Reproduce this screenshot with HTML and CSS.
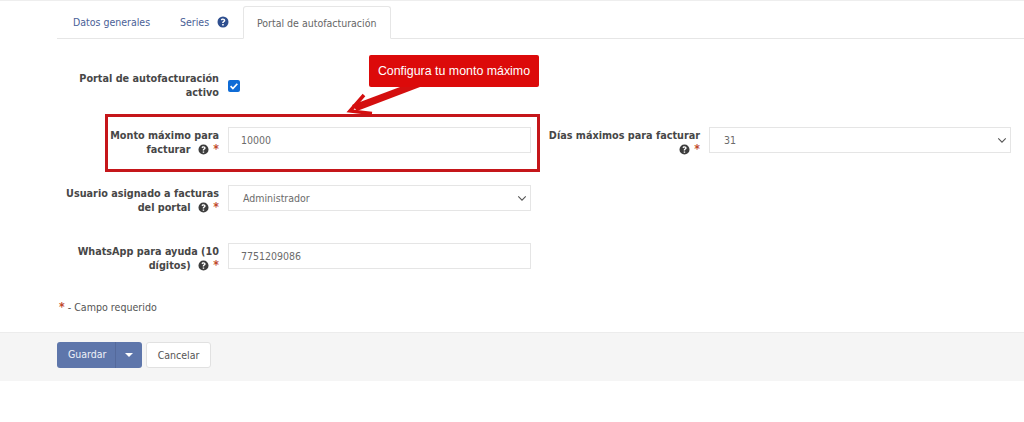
FILE: index.html
```html
<!DOCTYPE html>
<html lang="es">
<head>
<meta charset="utf-8">
<title>Portal de autofacturación</title>
<link rel="stylesheet" href="styles.css">
</head>
<body>
<div class="page">
  <nav class="tabs">
    <a class="tab">Datos generales</a>
    <a class="tab">Series <svg class="help help-blue" viewBox="0 0 24 24"><use href="#q"/></svg></a>
    <a class="tab active">Portal de autofacturación</a>
  </nav>
  <form class="form">
    <div class="row row-first">
      <label class="label">Portal de autofacturación<br>activo</label>
      <div class="check-cell"><span class="check"><svg viewBox="0 0 12 12"><path d="M2.6 6.200l2.300 2.300 4.400-4.800" fill="none" stroke="#fff" stroke-width="1.700"/></svg></span></div>
    </div>
    <div class="row">
      <label class="label">Monto máximo para<br>facturar <span class="marks"><svg class="help" viewBox="0 0 24 24"><use href="#q"/></svg> <i>*</i></span></label>
      <div class="control">10000</div>
      <label class="label">Días máximos para facturar<br><span class="marks"><svg class="help" viewBox="0 0 24 24"><use href="#q"/></svg> <i>*</i></span></label>
      <div class="control select">31<svg class="chev" viewBox="0 0 12 8"><path d="M1.500 1.500L6 6l4.500-4.500" fill="none" stroke="#555" stroke-width="1.300"/></svg></div>
    </div>
    <div class="row">
      <label class="label">Usuario asignado a facturas<br>del portal <span class="marks"><svg class="help" viewBox="0 0 24 24"><use href="#q"/></svg> <i>*</i></span></label>
      <div class="control select">Administrador<svg class="chev" viewBox="0 0 12 8"><path d="M1.500 1.500L6 6l4.500-4.500" fill="none" stroke="#555" stroke-width="1.300"/></svg></div>
    </div>
    <div class="row">
      <label class="label">WhatsApp para ayuda (10<br>dígitos) <span class="marks"><svg class="help" viewBox="0 0 24 24"><use href="#q"/></svg> <i>*</i></span></label>
      <div class="control">7751209086</div>
    </div>
    <p class="note"><i>*</i> - Campo requerido</p>
  </form>
  <footer class="actions">
    <div class="split"><span class="split-main">Guardar</span><span class="split-caret"></span></div>
    <span class="cancel">Cancelar</span>
  </footer>
</div>
<div class="highlight"></div>
<div class="callout">Configura tu monto máximo</div>
<svg class="arrow" viewBox="0 0 100 40"><path d="M60 7H80L17 31 12 25z" fill="#d40f0f"/><path d="M24 15L10 31l22 2.500" stroke="#d40f0f" stroke-width="3.500" fill="none"/></svg>
<svg class="defs" width="0" height="0"><symbol id="q" viewBox="0 0 24 24"><path fill-rule="evenodd" d="M12 1a11 11 0 1 0 0 22 11 11 0 0 0 0-22zm-.1 3.800c2.700 0 4.700 1.600 4.700 4 0 1.700-1 2.600-2.100 3.300-.9.6-1.200 1-1.200 1.700v.4h-3v-.7c0-1.500.6-2.300 1.800-3.100.9-.6 1.400-1 1.400-1.600 0-.7-.6-1.200-1.500-1.200-1 0-1.700.6-2.100 1.500L7.400 7.300c.8-1.500 2.300-2.500 4.500-2.500zM10.300 16.200h3.200v3h-3.200z"/></symbol></svg>
</body>
</html>
```
FILE: styles.css
```css
* { box-sizing: border-box; }
html, body { margin: 0; padding: 0; background: #fff; }
body {
  position: relative;
  height: 422px;
  overflow: hidden;
  font-family: "DejaVu Sans Condensed", "DejaVu Sans", Verdana, sans-serif;
  font-stretch: condensed;
  color: #555;
  border-top: 1px solid #eeeeee;
}
.tabs {
  display: flex;
  margin: 5px 0 0 57px;
  height: 33px;
  border-bottom: 1px solid #e6e6e6;
  font-size: 10.5px;
}
.tab {
  display: flex;
  align-items: center;
  gap: 8px;
  padding: 0 16px;
  color: #4a6197;
  white-space: nowrap;
}
.tab:first-child { width: 108px; }
.tab:nth-child(2) { width: 78px; padding-left: 15px; }
.tab.active {
  width: 148px;
  height: 33px;
  padding: 0 13px;
  color: #666;
  background: #fff;
  border: 1px solid #e6e6e6;
  border-bottom-color: #fff;
  border-radius: 3px 3px 0 0;
}
.help { width: 11px; height: 11px; fill: #3d3d3d; vertical-align: -2px; flex: none; }
.help-blue { width: 12px; height: 12px; fill: #2f4f8f; }
.form { padding-top: 33px; }
.row {
  display: grid;
  grid-template-columns: 162px 303px 160px 302px;
  column-gap: 9px;
  margin-left: 57px;
  height: 58px;
  align-items: start;
}
.row-first { height: 55px; }
.label {
  font-size: 10.75px;
  font-weight: 700;
  line-height: 13.5px;
  text-align: right;
  color: #474747;
}
.row .label { padding-top: 2px; }
.row-first .label { padding-top: 0; line-height: 14px; }
.marks { white-space: nowrap; margin-left: 4px; }
.marks .help { margin-right: 1px; }
i { font-style: normal; color: #c0492b; font-size: 12px; line-height: 1; font-weight: 700; }
.check-cell { padding-top: 8px; }
.check {
  display: block;
  width: 12px;
  height: 12px;
  background: #0f6cd6;
  border-radius: 2px;
}
.check svg { display: block; }
.control {
  position: relative;
  height: 26px;
  line-height: 24px;
  padding-left: 12px;
  font-size: 10.5px;
  border: 1px solid #e5e5e5;
  background: #fff;
  color: #6b6b6b;
}
.select { padding-left: 14px; }
.chev { position: absolute; right: 3px; top: 9px; width: 10px; height: 7px; }
.note { margin: 0 0 0 59px; font-size: 10.6px; line-height: 14px; color: #555; position: relative; top: -1px; }
.actions {
  position: absolute;
  left: 0;
  right: 0;
  top: 331px;
  height: 49px;
  display: flex;
  gap: 4px;
  padding: 9px 0 0 57px;
  background: #f5f5f5;
  border-top: 1px solid #ececec;
}
.split {
  display: flex;
  width: 85px;
  height: 26px;
  background: #5e76ab;
  border-radius: 3px;
  color: #eef1f7;
  font-size: 10.5px;
  line-height: 25px;
}
.split-main { width: 59px; padding-left: 11px; border-right: 1px solid #54699b; }
.split-caret {
  width: 0;
  height: 0;
  margin: 11px 0 0 9px;
  border: 4px solid transparent;
  border-top-color: #fff;
  border-bottom: 0;
}
.cancel {
  width: 65px;
  height: 26px;
  line-height: 24px;
  text-align: center;
  font-size: 10.5px;
  color: #555;
  background: #fff;
  border: 1px solid #e1e1e1;
  border-radius: 3px;
}
.highlight {
  position: absolute;
  left: 105px;
  top: 113px;
  width: 435px;
  height: 58px;
  border: 3px solid #c5161a;
}
.callout {
  position: absolute;
  left: 369px;
  top: 54px;
  width: 170px;
  height: 32px;
  background: #dc0a0a;
  border-radius: 2px;
  color: #fff;
  font-family: "Liberation Sans", Arial, sans-serif;
  font-stretch: normal;
  font-size: 12.4px;
  line-height: 32px;
  text-align: center;
}
.arrow { position: absolute; left: 340px; top: 79px; width: 100px; height: 40px; }
.defs { position: absolute; }
```
